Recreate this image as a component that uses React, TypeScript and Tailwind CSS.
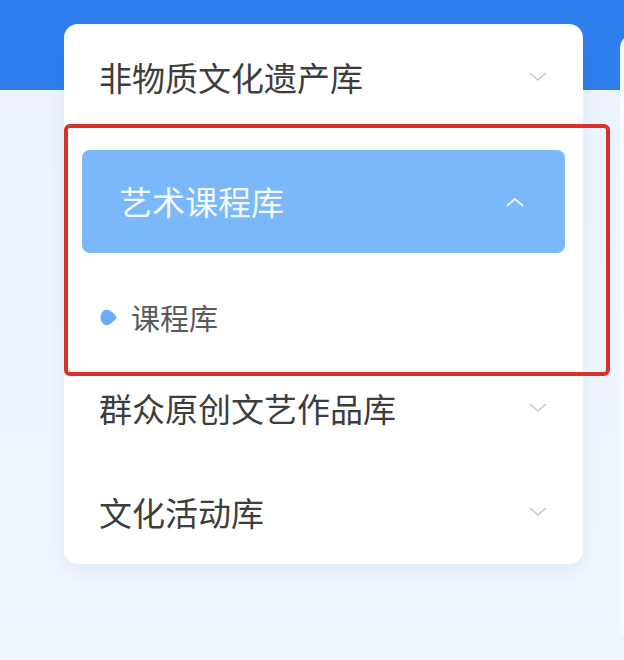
import React from "react";

const FONT = { fontFamily: '"Noto Sans CJK SC", "Noto Sans", sans-serif' };

function ChevronDown({ className }: { className?: string }) {
  return (
    <svg width="18" height="10" viewBox="0 0 18 10" className={className} fill="none">
      <path d="M1.5 1.5 L9 8 L16.5 1.5" stroke="currentColor" strokeWidth="1.6" strokeLinecap="round" strokeLinejoin="round" />
    </svg>
  );
}

function ChevronUp({ className }: { className?: string }) {
  return (
    <svg width="18" height="10" viewBox="0 0 18 10" className={className} fill="none">
      <path d="M1.5 8.5 L9 2 L16.5 8.5" stroke="currentColor" strokeWidth="1.8" strokeLinecap="round" strokeLinejoin="round" />
    </svg>
  );
}

function Bullet() {
  // rounded "play" shaped dot
  return (
    <svg width="17" height="17" viewBox="0 0 16 16">
      <path d="M6.5 0.8 C2.9 0.8 0.5 4 0.5 8 C0.5 12 2.9 15.2 6.5 15.2 C9.2 15.2 12.8 12 14.8 9.5 C15.5 8.6 15.5 7.4 14.8 6.5 C12.8 4 9.2 0.8 6.5 0.8 Z" fill="#68aef6" />
    </svg>
  );
}

function MenuRow({ label }: { label: string }) {
  return (
    <div className="flex h-[104px] items-center justify-between pl-[35px] pr-[36px]">
      <span className="text-[33px] leading-none text-[#3d3d3d]">{label}</span>
      <ChevronDown className="text-[#c4c7cc]" />
    </div>
  );
}

export default function App() {
  return (
    <div
      className="relative h-[660px] w-[624px] overflow-hidden bg-[linear-gradient(to_bottom,#2f80ee_0px,#2e7eed_90px,#ebf4fd_90px,#eef6fe_660px)]"
      style={FONT}
    >
      <div className="flex items-start gap-[37px] pl-[64px] pt-[24px]">
        {/* menu card */}
        <div className="w-[519px] shrink-0 rounded-[14px] bg-white shadow-[0_6px_16px_rgba(40,100,180,0.07)]">
          <div className="flex h-[106px] items-center justify-between pl-[35px] pr-[36px]">
            <span className="text-[33px] leading-none text-[#3d3d3d]">非物质文化遗产库</span>
            <ChevronDown className="text-[#c4c7cc]" />
          </div>

          <div className="px-[18px] pt-[20px]">
            <div className="flex h-[103px] items-center justify-between rounded-[8px] bg-[#7ab8fa] pl-[37px] pr-[41px]">
              <span className="text-[33px] leading-none text-[#f4f9ff]">艺术课程库</span>
              <ChevronUp className="text-[#eef6ff]" />
            </div>
          </div>

          <div className="mt-[39px] mb-[14px] flex h-[50px] items-center gap-[14px] pl-[36px]">
            <Bullet />
            <span className="text-[29px] leading-none text-[#5a5a5a]">课程库</span>
          </div>

          <MenuRow label="群众原创文艺作品库" />
          <MenuRow label="文化活动库" />
        </div>

        {/* next card peeking at the right edge */}
        <div className="mt-[10px] h-[600px] w-[200px] shrink-0 rounded-tl-[14px] bg-[#f7fbff]" />
      </div>

      {/* red annotation frame */}
      <div className="pointer-events-none absolute left-[64px] top-[124px] h-[252px] w-[546px] rounded-[6px] border-[4px] border-[#d8322b]" />
    </div>
  );
}
